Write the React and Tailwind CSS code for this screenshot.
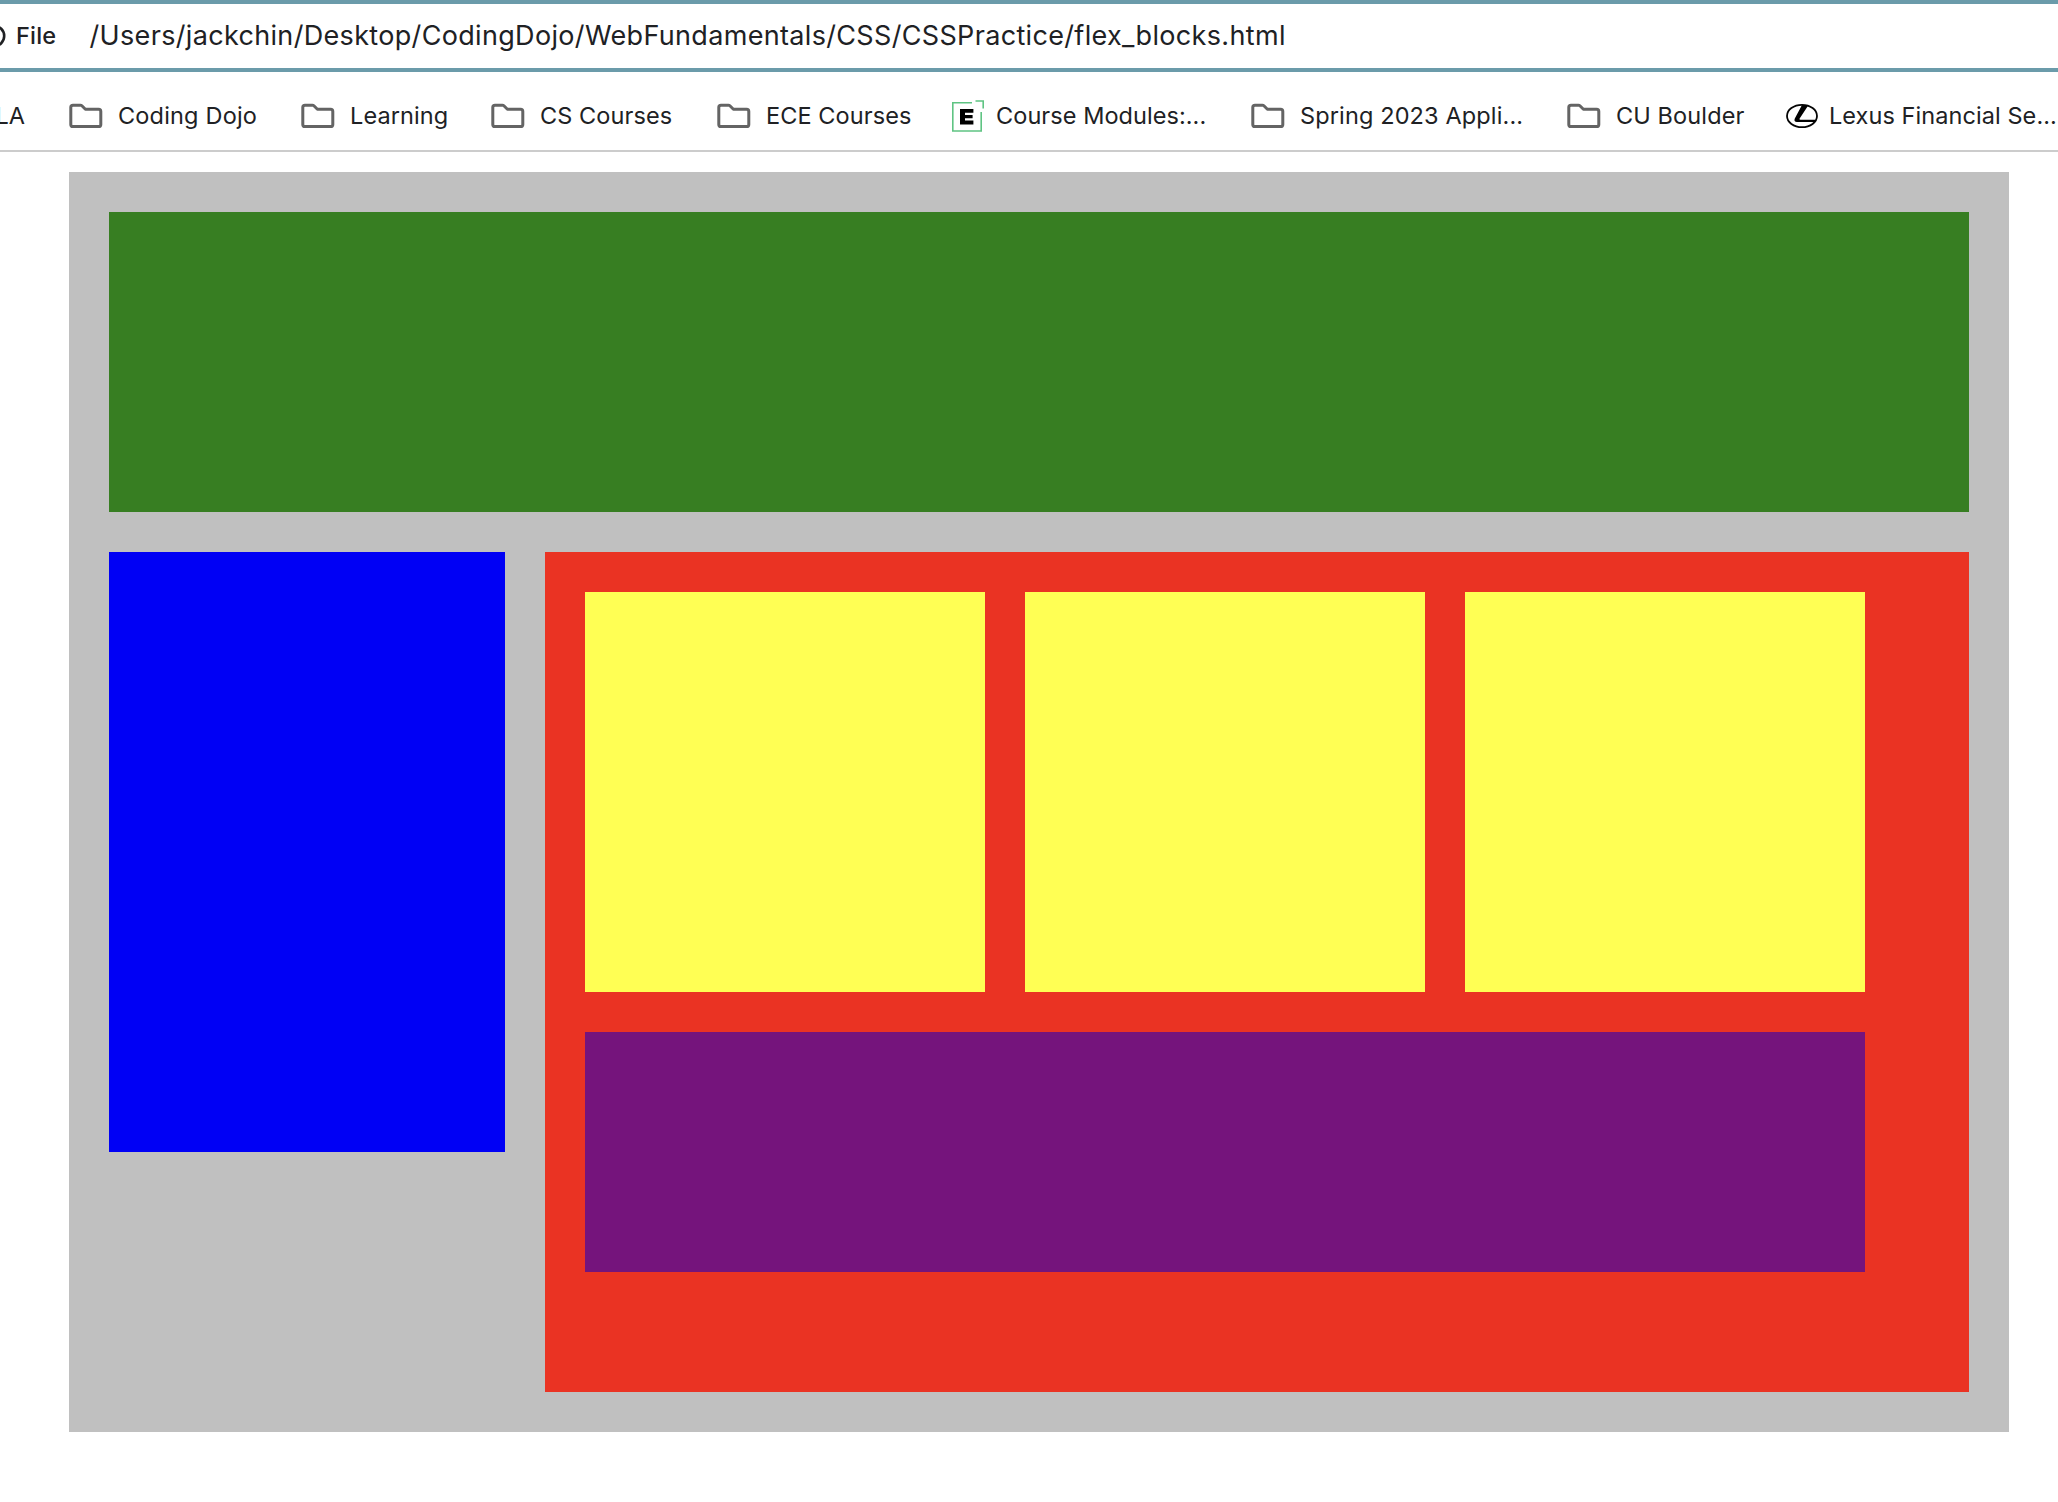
const FolderIcon = () => (
  <svg className="h-8 w-[34px] shrink-0" viewBox="0 0 34 32" fill="none">
    <path
      d="M4 5.2h7.4q.9 0 1.5.6L16.4 9.3H29.6q2.2 0 2.2 2.2V24.4q0 2.1-2.2 2.1H4q-2.2 0-2.2-2.1V7.3q0-2.1 2.2-2.1z"
      stroke="#646464"
      strokeWidth="3"
      strokeLinejoin="round"
    />
  </svg>
);

const CourseIcon = () => (
  <svg className="h-8 w-8 shrink-0" viewBox="0 0 32 32" fill="none">
    <path d="M20 2.8H.8V31H29.2V12" stroke="#5fc483" strokeWidth="1.6" />
    <path d="M23.5 1H31.2V8.5" stroke="#5fc483" strokeWidth="1.6" />
    <path d="M8 9H21.4V12.8H13V15H20.6V18.2H13V20.4H21.4V24.4H8z" fill="#000" />
  </svg>
);

const LexusIcon = () => (
  <svg className="h-8 w-8 shrink-0" viewBox="0 0 32 32" fill="none">
    <ellipse cx="16" cy="16" rx="15" ry="11.2" stroke="#050505" strokeWidth="1.8" />
    <path d="M16 5L22.2 5.4L13.5 18.8Q13.2 19.8 14.4 19.8H29.8L28.4 22H11Q7.5 21.6 8.8 18.5z" fill="#000" />
  </svg>
);

const icons = { folder: FolderIcon, course: CourseIcon, lexus: LexusIcon };

const bookmarks = [
  { label: "Coding Dojo", icon: "folder", box: "w-[232px] gap-[15px]", text: "tracking-[0.18px]" },
  { label: "Learning", icon: "folder", box: "w-[190px] gap-[15px]", text: "tracking-[0.1px]" },
  { label: "CS Courses", icon: "folder", box: "w-[226px] gap-[15px]", text: "tracking-[0.08px]" },
  { label: "ECE Courses", icon: "folder", box: "w-[235px] gap-[15px]", text: "tracking-[0.08px]" },
  { label: "Course Modules:...", icon: "course", box: "w-[299px] gap-[12px]", text: "tracking-[0.06px]" },
  { label: "Spring 2023 Appli...", icon: "folder", box: "w-[316px] gap-[15px]", text: "tracking-[0.13px]" },
  { label: "CU Boulder", icon: "folder", box: "w-[219px] gap-[15px]", text: "tracking-[0.12px]" },
  { label: "Lexus Financial Se...", icon: "lexus", box: "w-[272px] gap-[11px]", text: "tracking-[0.07px]" },
];

export default function App() {
  return (
    <div className="h-[1502px] w-[2058px] overflow-hidden bg-white font-['Inter',sans-serif] text-[#202124]">
      <div className="flex h-[72px] items-center overflow-hidden border-y-4 border-[#6b9baa] whitespace-nowrap">
        <svg className="h-6 w-[6px] shrink-0" viewBox="0 0 6 24" fill="none">
          <circle cx="-6" cy="12" r="10.2" stroke="#202124" strokeWidth="2.6" />
        </svg>
        <span className="ml-[10px] w-[73.5px] text-[23.5px] font-medium tracking-[0.2px]">File</span>
        <span className="pt-px text-[27px] tracking-[0.33px]">
          /Users/jackchin/Desktop/CodingDojo/WebFundamentals/CSS/CSSPractice/flex_blocks.html
        </span>
      </div>
      <div className="flex h-20 items-center overflow-hidden border-b-2 border-[#cccccc] pt-[10px] text-[23.5px] whitespace-nowrap">
        <div className="flex w-[69px] shrink-0">
          <span className="flex w-[25px] justify-end">LA</span>
        </div>
        {bookmarks.map(({ label, icon, box, text }) => {
          const Icon = icons[icon];
          return (
            <div key={label} className={`flex shrink-0 items-center ${box}`}>
              <Icon />
              <span className={text}>{label}</span>
            </div>
          );
        })}
      </div>
      <main className="mt-5 ml-[69px] flex h-[1260px] w-[1940px] flex-col gap-10 bg-[#c0c0c0] p-10">
        <div className="h-[300px] bg-[#377e22]" />
        <div className="flex items-start gap-10">
          <div className="h-[600px] w-[396px] bg-[#0000f5]" />
          <div className="flex h-[840px] w-[1424px] flex-col gap-10 bg-[#ea3323] p-10">
            <div className="flex gap-10">
              <div className="size-[400px] bg-[#ffff54]" />
              <div className="size-[400px] bg-[#ffff54]" />
              <div className="size-[400px] bg-[#ffff54]" />
            </div>
            <div className="h-[240px] w-[1280px] bg-[#75147c]" />
          </div>
        </div>
      </main>
    </div>
  );
}
